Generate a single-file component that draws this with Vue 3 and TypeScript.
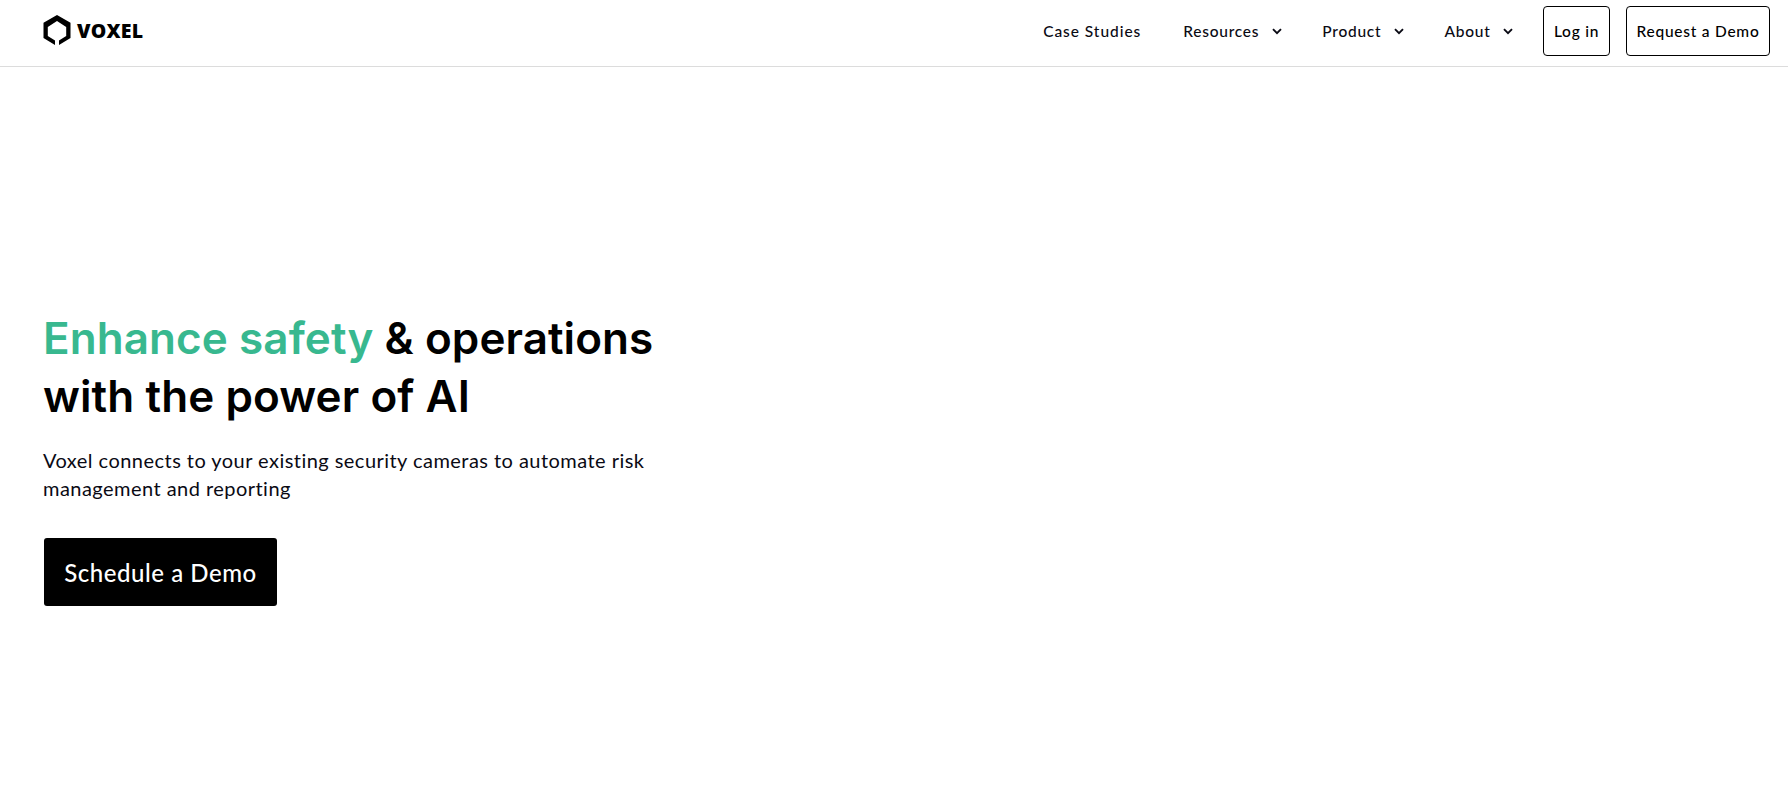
<script setup lang="ts">
interface NavItem { label: string; menu: boolean }
const nav: NavItem[] = [
  { label: 'Case Studies', menu: false },
  { label: 'Resources', menu: true },
  { label: 'Product', menu: true },
  { label: 'About', menu: true },
]
</script>

<template>
  <div class="page">
    <header class="header">
      <a class="brand">
        <svg class="mark" width="28" height="31" viewBox="0 0 28 31" aria-hidden="true">
          <path d="M14 0 L27.5 7.8 L27.5 23 L16 30 L16 25.4 L23.2 21 L23.2 12 L14 6 L4.8 12 L4.8 21 L12 25.4 L12 30 L0.5 23 L0.5 7.8 Z" fill="#000" />
        </svg>
        <span class="word">VOXEL</span>
      </a>
      <nav class="nav">
        <a v-for="item in nav" :key="item.label" class="link" :class="{ plain: !item.menu }">
          <span>{{ item.label }}</span>
          <svg v-if="item.menu" class="chev" width="10" height="7" viewBox="0 0 10 7" aria-hidden="true">
            <path d="M1 1.2 L5 5.2 L9 1.2" fill="none" stroke="#0a0a14" stroke-width="1.9" />
          </svg>
        </a>
        <a class="btn login">Log in</a>
        <a class="btn demo">Request a Demo</a>
      </nav>
    </header>
    <main class="hero">
      <h1 class="title"><span class="accent">Enhance safety</span> &amp; operations<br />with the power of AI</h1>
      <p class="lead">Voxel connects to your existing security cameras to automate risk<br />management and reporting</p>
      <a class="cta">Schedule a Demo</a>
    </main>
  </div>
</template>

<style>
html, body { margin: 0; background: #fff; }
</style>

<style scoped>
.page {
  height: 796px;
  overflow: hidden;
  font-family: Lato, "Liberation Sans", sans-serif;
  color: #0a0a14;
}
.header {
  height: 61px;
  padding: 0 18px 5px 43px;
  border-bottom: 1px solid #dcdcdc;
  display: flex;
  align-items: center;
  justify-content: space-between;
}
.brand { display: flex; align-items: center; gap: 6px; }
.mark { display: block; }
.word {
  font-family: "Open Sans", sans-serif;
  font-weight: 800;
  font-size: 19.5px;
  letter-spacing: 0.2px;
  color: #000;
}
.nav { display: flex; align-items: center; font-size: 15.5px; font-weight: 500; letter-spacing: 0.75px; }
.link { display: flex; align-items: center; gap: 12.5px; margin-right: 40.5px; }
.link.plain { margin-right: 42px; letter-spacing: 0.95px; }
.link:nth-child(4) { margin-right: 30px; }
.chev { display: block; margin-top: 2px; }
.btn {
  box-sizing: border-box;
  height: 50px;
  display: flex;
  align-items: center;
  justify-content: center;
  border: 1.5px solid #000;
  border-radius: 4px;
  color: #000;
}
.login { width: 67px; margin-right: 16px; }
.demo { width: 144px; }
.hero { padding: 242px 0 0 44px; }
.title {
  margin: 0 0 0 -1px;
  font-family: Inter, sans-serif;
  font-weight: 600;
  font-size: 44px;
  line-height: 58px;
  letter-spacing: 0.08px;
  color: #000;
}
.accent { color: #38b88f; }
.lead {
  margin: 21px 0 0 -1px;
  font-size: 20px;
  line-height: 28px;
  letter-spacing: 0.46px;
}
.cta {
  margin-top: 36px;
  width: 233px;
  height: 68px;
  display: flex;
  align-items: center;
  justify-content: center;
  background: #000;
  color: #fff;
  border-radius: 3px;
  font-size: 24px;
  font-weight: 500;
  letter-spacing: 0.55px;
}
</style>
